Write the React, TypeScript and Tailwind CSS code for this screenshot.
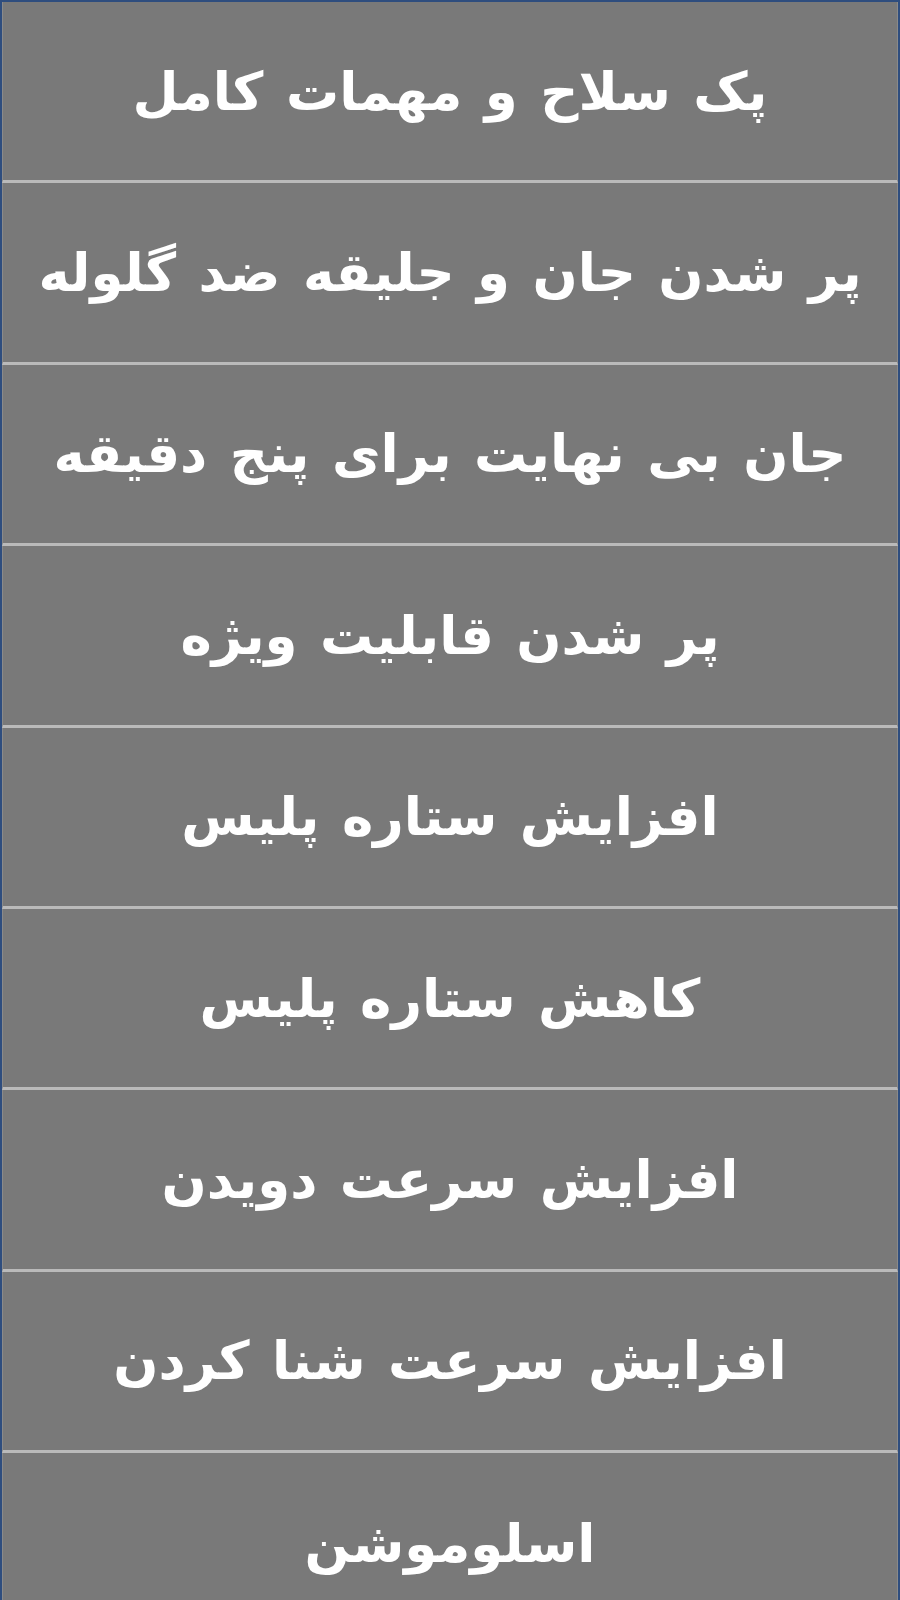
const ITEMS = [
  'پک سلاح و مهمات کامل',
  'پر شدن جان و جلیقه ضد گلوله',
  'جان بی نهایت برای پنج دقیقه',
  'پر شدن قابلیت ویژه',
  'افزایش ستاره پلیس',
  'کاهش ستاره پلیس',
  'افزایش سرعت دویدن',
  'افزایش سرعت شنا کردن',
  'اسلوموشن',
];

export default function App() {
  return (
    <div className="w-[900px] h-[1600px] overflow-hidden bg-[#2e4d7e] px-[2px] pt-[2px]">
      <div className="flex flex-col divide-y-[3px] divide-[#bababa] bg-[#797979]">
        {ITEMS.map((label, i) => (
          <button
            key={i}
            dir="rtl"
            className="h-[181.4px] shrink-0 w-full flex items-center justify-center bg-[#797979] border-x border-x-[#8a8a8a] text-white font-bold text-[53px] leading-none [word-spacing:4px]"
            style={{ fontFamily: '"DejaVu Sans", sans-serif' }}
          >
            {label}
          </button>
        ))}
      </div>
    </div>
  );
}
